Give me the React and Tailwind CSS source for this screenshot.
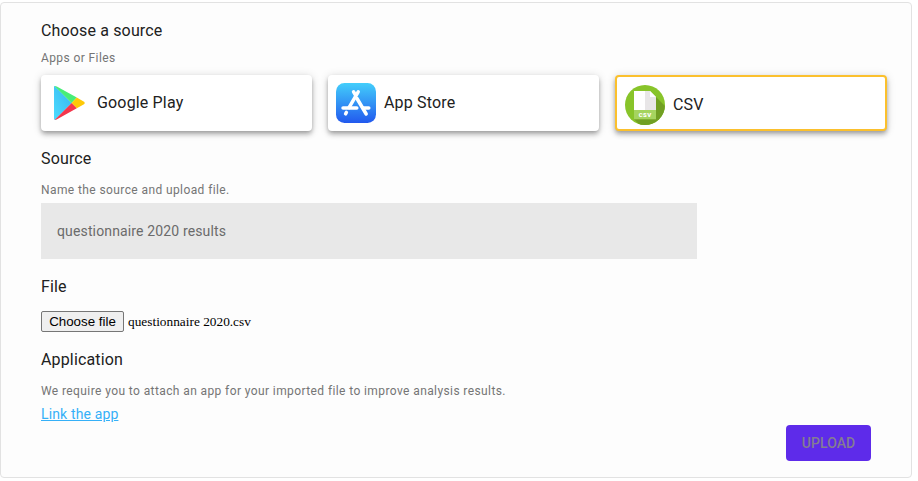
import React from "react";

function PlayIcon() {
  return (
    <svg width="40" height="40" viewBox="0 0 40 40" className="shrink-0">
      <defs>
        <linearGradient id="play-blue" x1="1" y1="0" x2="0" y2="1">
          <stop offset="0" stopColor="#35b4ee" />
          <stop offset="1" stopColor="#4ddcff" />
        </linearGradient>
      </defs>
      <path d="M5 3.8Q5 3 5.6 3L22.6 20L6 36.8Q5 37 5 36Z" fill="url(#play-blue)" />
      <path d="M5.4 3Q6.4 2.7 7.8 3.5L27.8 14.6L22.6 20Z" fill="#48ed78" />
      <path d="M27.8 14.6L35 18.7Q36.8 20 35 21.2L27.8 25.3L22.6 20Z" fill="#fec907" />
      <path d="M22.6 20L27.8 25.3L7.6 36.6Q6.4 37.3 5.6 36.9Z" fill="#f4364c" />
    </svg>
  );
}

function AppStoreIcon() {
  return (
    <svg width="40" height="40" viewBox="0 0 40 40" className="shrink-0">
      <defs>
        <linearGradient id="store-blue" x1="0" y1="0" x2="0" y2="1">
          <stop offset="0" stopColor="#43cefb" />
          <stop offset="1" stopColor="#2259ee" />
        </linearGradient>
      </defs>
      <rect width="40" height="40" rx="8.5" fill="url(#store-blue)" />
      <g stroke="#fff" strokeWidth="3.5" strokeLinecap="round" fill="none">
        <path d="M22.2 8.8L13 24.6" />
        <path d="M17.6 8.8L19.4 11.9" />
        <path d="M21 15.5L30.2 31" />
        <path d="M7 25.1H20.8" />
        <path d="M27 25.1H32.8" />
        <path d="M10.4 29.4L9.6 30.8" />
      </g>
    </svg>
  );
}

function CsvIcon() {
  return (
    <svg width="40" height="40" viewBox="0 0 40 40" className="shrink-0">
      <defs>
        <clipPath id="csv-circle">
          <circle cx="20" cy="20" r="20" />
        </clipPath>
      </defs>
      <g clipPath="url(#csv-circle)">
        <rect width="40" height="40" fill="#88c42a" />
        <path d="M30.5 11.5L42 23V42H17L9 34.3Z" fill="#719f23" />
        <path d="M9 6H20V25H9Z" fill="#fff" />
        <path d="M20 6H25L31 12V25H20Z" fill="#e8e6e7" />
        <path d="M25 6L31 12H25Z" fill="#fff" />
        <rect x="9" y="25" width="22" height="9.3" fill="#a5d45f" />
        <text x="20.2" y="31.8" textAnchor="middle" fontSize="6" fontWeight="900" letterSpacing="0.4" fill="#fff" className="font-['Roboto',sans-serif]">
          CSV
        </text>
      </g>
    </svg>
  );
}

function SourceCard({ icon, label, selected }) {
  return (
    <button
      type="button"
      className={
        "flex h-14 items-center gap-2 rounded bg-white pl-2 text-left text-base tracking-[0.16px] shadow-[0_2px_4px_-1px_rgba(0,0,0,0.25),0_4px_5px_0_rgba(0,0,0,0.16),0_1px_10px_0_rgba(0,0,0,0.14)] " +
        (selected ? "border-2 border-[#fbc02d] pt-1" : "")
      }
    >
      {icon}
      <span>{label}</span>
    </button>
  );
}

function Title({ children }) {
  return <h2 className="text-base leading-7 tracking-[0.15px]">{children}</h2>;
}

function Caption({ children }) {
  return <p className="text-xs leading-5 tracking-[0.4px] text-[#757575]">{children}</p>;
}

export default function App() {
  return (
    <div className="h-[481px] w-[918px] overflow-hidden bg-white pt-0.5 font-['Roboto',sans-serif] text-[#212121]">
      <div className="flex h-[476px] w-[912px] flex-col rounded border border-[#e2e2e2] bg-[#fdfdfd] pr-6 pl-10 pt-3.5">
        <section>
          <Title>Choose a source</Title>
          <div className="mt-[3px]">
            <Caption>Apps or Files</Caption>
          </div>
          <div className="mt-[7px] grid grid-cols-[271px_271px_272px] gap-4">
            <SourceCard icon={<PlayIcon />} label="Google Play" />
            <SourceCard icon={<AppStoreIcon />} label="App Store" />
            <SourceCard icon={<CsvIcon />} label="CSV" selected />
          </div>
        </section>
        <section className="mt-3.5">
          <Title>Source</Title>
          <div className="mt-[7px]">
            <Caption>Name the source and upload file.</Caption>
          </div>
          <div className="mt-[3px] flex h-14 w-[656px] items-center bg-[#e8e8e8] px-4 text-sm tracking-[0.14px] text-[#6b6b6b]">
            questionnaire 2020 results
          </div>
        </section>
        <section className="mt-3.5">
          <Title>File</Title>
          <div className="mt-2.5 flex h-[21px] items-center gap-1">
            <button
              type="button"
              className="h-[21px] w-[83px] rounded-[2px] border border-[#767676] bg-[#efefef] text-center font-['Liberation_Sans',Arial,sans-serif] text-[13.33px] leading-[19px] text-black"
            >
              Choose file
            </button>
            <span className="font-['Liberation_Serif',serif] text-[13.33px] leading-[21px] text-black">
              questionnaire 2020.csv
            </span>
          </div>
        </section>
        <section className="mt-3.5">
          <Title>Application</Title>
          <div className="mt-[7px]">
            <Caption>We require you to attach an app for your imported file to improve analysis results.</Caption>
          </div>
          <a className="mt-[3px] block w-fit text-sm leading-5 tracking-[0.14px] text-[#35b0f8] underline">
            Link the app
          </a>
        </section>
        <button
          type="button"
          className="mt-px mr-4 h-9 w-[85px] self-end rounded bg-[#5e2bea] text-sm font-medium tracking-[0.05px] text-[#847d91]"
        >
          UPLOAD
        </button>
      </div>
    </div>
  );
}
